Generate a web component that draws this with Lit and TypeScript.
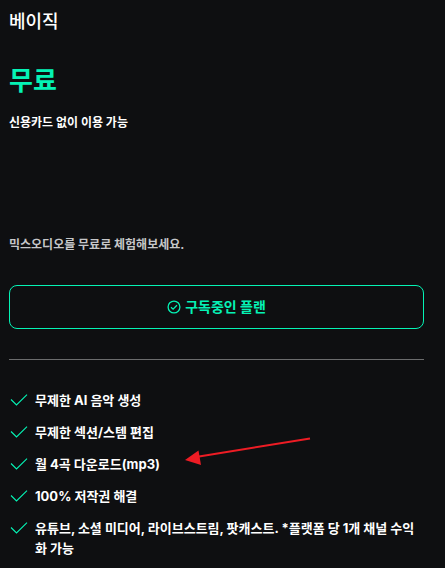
import { LitElement, html, css } from "lit";
import { customElement } from "lit/decorators.js";

interface Feature {
  text: string;
  highlighted?: boolean;
}

const FEATURES: Feature[] = [
  { text: "무제한 AI 음악 생성" },
  { text: "무제한 섹션/스템 편집" },
  { text: "월 4곡 다운로드(mp3)", highlighted: true },
  { text: "100% 저작권 해결" },
  { text: "유튜브, 소셜 미디어, 라이브스트림, 팟캐스트. *플랫폼 당 1개 채널 수익화 가능" },
];

@customElement("app-root")
export class AppRoot extends LitElement {
  static styles = css`
    :host {
      display: block;
      box-sizing: border-box;
      min-height: 100vh;
      padding: 8px 21px 8px 9px;
      background: #0e0f11;
      color: #fff;
      font-family: Inter, "Noto Sans CJK KR", sans-serif;
      font-size: 13px;
      line-height: 20px;
      font-weight: 700;
    }
    h2, p, ul {
      margin: 0;
      padding: 0;
    }
    .name {
      font-size: 18px;
      line-height: 28px;
      font-weight: 500;
    }
    .price {
      margin-top: 25px;
      font-size: 26px;
      line-height: 40px;
      color: #05f3b5;
    }
    .note {
      min-height: 102px;
      margin-top: 12px;
      font-size: 12px;
    }
    .summary {
      margin-top: 20px;
      font-size: 12px;
      color: #c6c7c9;
    }
    .plan {
      display: flex;
      align-items: center;
      justify-content: center;
      gap: 4px;
      width: 100%;
      height: 44px;
      margin-top: 30px;
      padding: 0;
      border: 1px solid #05f3b5;
      border-radius: 8px;
      background: transparent;
      color: #05f3b5;
      font: inherit;
      font-size: 14px;
    }
    .divider {
      height: 1px;
      margin: 30px 0;
      border: 0;
      background: #6b6c6d;
    }
    .features {
      display: flex;
      flex-direction: column;
      gap: 12px;
      list-style: none;
    }
    .feature {
      display: flex;
      gap: 6px;
    }
    .check {
      flex: none;
    }
    .label {
      position: relative;
      word-break: break-all;
    }
    .arrow {
      position: absolute;
      top: -18px;
      left: 150px;
    }
  `;

  private renderArrow() {
    return html`<svg class="arrow" width="126" height="32" viewBox="0 0 126 32" aria-hidden="true">
      <path d="M125 2.5 14 20.5" fill="none" stroke="#ed1c24" stroke-width="2" />
      <path d="M0 24 13.5 14.5 16 29Z" fill="#ed1c24" />
    </svg>`;
  }

  render() {
    return html`
      <h2 class="name">베이직</h2>
      <p class="price">무료</p>
      <p class="note">신용카드 없이 이용 가능</p>
      <p class="summary">믹스오디오를 무료로 체험해보세요.</p>
      <button class="plan" type="button">
        <svg width="14" height="14" viewBox="0 0 14 14" fill="none" stroke="currentColor" stroke-width="1.3" aria-hidden="true">
          <circle cx="7" cy="7" r="5.9" />
          <path d="m4 7.2 2.1 2L10 5.3" />
        </svg>
        <span>구독중인 플랜</span>
      </button>
      <hr class="divider" />
      <ul class="features">
        ${FEATURES.map(
          (f) => html`<li class="feature">
            <svg class="check" width="20" height="20" viewBox="0 0 20 20" fill="none" stroke="#05f3b5" stroke-width="1.1" aria-hidden="true">
              <path d="m2 9.5 5.5 5.5L18 4.7" />
            </svg>
            <span class="label">${f.text}${f.highlighted ? this.renderArrow() : null}</span>
          </li>`
        )}
      </ul>
    `;
  }
}
